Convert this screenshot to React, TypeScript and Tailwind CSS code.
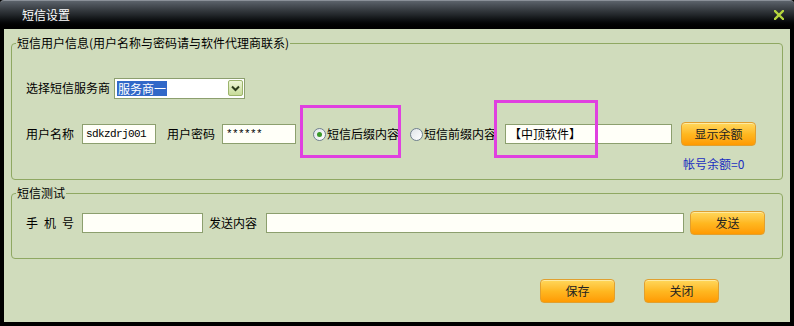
import React from "react";

const font = { fontFamily: '"Noto Sans CJK SC", "Noto Sans", sans-serif' };

function OrangeButton({ label }: { label: string }) {
  return (
    <button className="w-[75px] h-[24px] shrink-0 rounded-[4px] border border-[#e0a030] bg-gradient-to-b from-[#ffd85a] via-[#ffb820] to-[#ff9a00] text-[12px] leading-[14px] text-[#222] shadow-[inset_0_1px_0_#ffeaa0]">
      {label}
    </button>
  );
}

function TextInput({ w, value, mono }: { w: string; value?: string; mono?: boolean }) {
  return (
    <div
      className={`${w} h-[20px] shrink-0 border border-[#8c9f6e] bg-[#fffff8] flex items-center pl-[3px] text-[12px] text-black overflow-hidden`}
    >
      {mono ? (
        <span className="text-[11px] tracking-[-0.6px]" style={{ fontFamily: '"Liberation Mono", monospace' }}>
          {value}
        </span>
      ) : (
        <span>{value}</span>
      )}
    </div>
  );
}

function Radio({ checked }: { checked?: boolean }) {
  return (
    <span className="w-[13px] h-[13px] shrink-0 rounded-full border border-[#6f7f8f] bg-gradient-to-br from-[#dfe4e8] to-[#ffffff] flex items-center justify-center">
      {checked && <span className="w-[5px] h-[5px] rounded-full bg-[#3a9a2a]" />}
    </span>
  );
}

export default function App() {
  return (
    <div className="w-[794px] h-[326px] bg-black flex flex-col text-[12px] leading-[14px]" style={font}>
      {/* Title bar */}
      <div className="h-[29px] shrink-0 flex items-center justify-between rounded-t-[4px] border-t border-[#8a9098] bg-gradient-to-b from-[#5c636b] via-[#22262a] to-[#000000] pl-[22px] pr-[10px]">
        <span className="text-white text-[12px]">短信设置</span>
        <svg width="10" height="10" viewBox="0 0 10 10" className="mt-[-1px]">
          <path d="M1 1 L9 9 M9 1 L1 9" stroke="#b6d63e" strokeWidth="2.4" strokeLinecap="square" />
        </svg>
      </div>

      {/* Body */}
      <div className="relative flex-1 mx-[4px] mb-[4px] bg-[#d0dcbc] pt-[7px] px-[7px] flex flex-col">
        {/* Group 1 */}
        <fieldset className="h-[144px] border border-[#8fa862] rounded-[4px]">
          <legend className="ml-[4px] px-[1px] text-[12px] leading-[14px] text-black">
            短信用户信息(用户名称与密码请与软件代理商联系)
          </legend>
          <div className="flex flex-col">
            {/* Row 1 */}
            <div className="mt-[28px] h-[20px] flex items-center pl-[14px]">
              <span>选择短信服务商</span>
              <div className="ml-[4px] w-[131px] h-[21px] border border-[#8c9f6e] bg-white flex items-center justify-between pl-[2px] pr-[1px]">
                <span className="bg-[#3168c8] text-white px-[1px] leading-[15px]">服务商一</span>
                <span className="w-[15px] h-[16px] border border-[#9cb46c] rounded-[2px] bg-gradient-to-b from-[#eef6d8] to-[#c8dc98] flex items-center justify-center">
                  <svg width="9" height="7" viewBox="0 0 9 7">
                    <path d="M1 1.5 L4.5 5 L8 1.5" fill="none" stroke="#2c3c1c" strokeWidth="2" />
                  </svg>
                </span>
              </div>
            </div>
            {/* Row 2 */}
            <div className="mt-[26px] h-[20px] flex items-center pl-[14px]">
              <span className="shrink-0">用户名称</span>
              <div className="ml-[8px]">
                <TextInput w="w-[74px]" value="sdkzdrj001" mono />
              </div>
              <span className="ml-[11px] shrink-0">用户密码</span>
              <div className="ml-[7px]">
                <TextInput w="w-[74px]" value="******" mono />
              </div>
              <span className="ml-[17px] flex items-center">
                <Radio checked />
                <span className="ml-[1px]">短信后缀内容</span>
              </span>
              <span className="ml-[11px] flex items-center">
                <Radio />
                <span className="ml-[1px]">短信前缀内容</span>
              </span>
              <div className="ml-[9px]">
                <TextInput w="w-[167px]" value="【中顶软件】" />
              </div>
              <div className="ml-[9px]">
                <OrangeButton label="显示余额" />
              </div>
            </div>
            {/* Row 3 */}
            <div className="mt-[13px] pl-[671px] text-[#1a2fc0] leading-[14px]">帐号余额=0</div>
          </div>
        </fieldset>

        {/* Group 2 */}
        <fieldset className="mt-[6px] h-[73px] border border-[#8fa862] rounded-[4px]">
          <legend className="ml-[4px] px-[1px] text-[12px] leading-[14px] text-black">短信测试</legend>
          <div className="mt-[13px] h-[20px] flex items-center pl-[14px]">
            <span className="w-[48px] shrink-0 flex justify-between">
              <span>手</span>
              <span>机</span>
              <span>号</span>
            </span>
            <div className="ml-[8px]">
              <TextInput w="w-[121px]" />
            </div>
            <span className="ml-[6px] shrink-0">发送内容</span>
            <div className="ml-[9px]">
              <TextInput w="w-[418px]" />
            </div>
            <div className="ml-[6px]">
              <OrangeButton label="发送" />
            </div>
          </div>
        </fieldset>

        {/* Bottom buttons */}
        <div className="mt-[20px] flex pl-[529px] gap-[29px]">
          <OrangeButton label="保存" />
          <OrangeButton label="关闭" />
        </div>

        {/* Annotation boxes */}
        <div className="absolute left-[296px] top-[76px] w-[101px] h-[53px] border-[3px] border-[#e040e0] pointer-events-none" />
        <div className="absolute left-[490px] top-[71px] w-[104px] h-[58px] border-[3px] border-[#e040e0] pointer-events-none" />
      </div>
    </div>
  );
}
